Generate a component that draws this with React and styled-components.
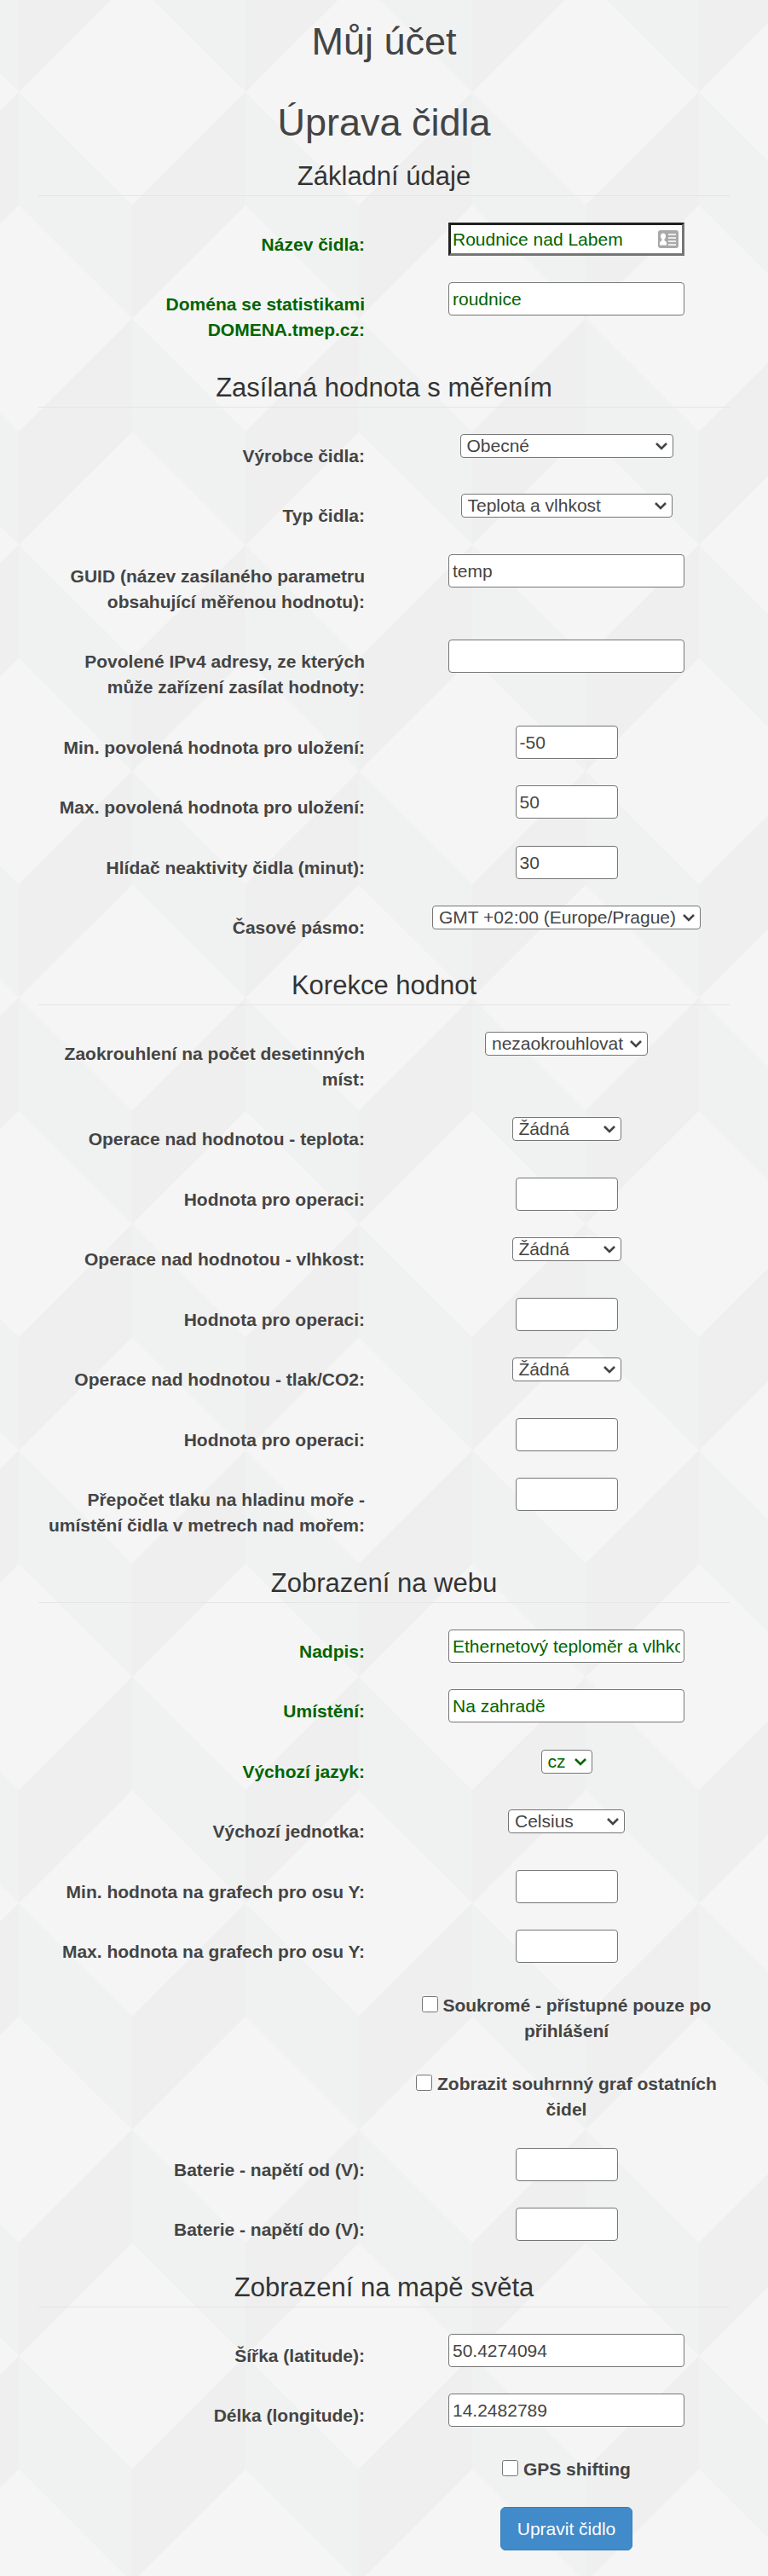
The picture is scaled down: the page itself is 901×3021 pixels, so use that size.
import { useState } from 'react';
import styled, { createGlobalStyle } from 'styled-components';

const svgUrl = (svg) => `url("data:image/svg+xml,${encodeURIComponent(svg)}")`;

const pattern = svgUrl(
  `<svg xmlns="http://www.w3.org/2000/svg" width="266" height="531" viewBox="0 0 4 8" preserveAspectRatio="none">
    <path fill="#f5f5f5" d="M0 0h4v8H0z"/>
    <path fill="#f0f2f1" d="M0 0l2 2v2L0 2zM4 6L2 4v2l2 2z"/>
    <path fill="#efefef" d="M4 0L2 2v2l2-2zM0 6l2-2v2L0 8z"/>
  </svg>`
);

const chevron = (color) =>
  svgUrl(
    `<svg xmlns="http://www.w3.org/2000/svg" width="14" height="10" viewBox="0 0 14 10">
      <path fill="none" stroke="${color}" stroke-width="2.6" d="M1 2l6 6 6-6"/>
    </svg>`
  );

const sections = [
  {
    title: 'Základní údaje',
    fields: [
      { id: 'nazev', label: 'Název čidla:', value: 'Roudnice nad Labem', green: true, active: true },
      { id: 'domena', label: 'Doména se statistikami DOMENA.tmep.cz:', value: 'roudnice', green: true },
    ],
  },
  {
    title: 'Zasílaná hodnota s měřením',
    fields: [
      { id: 'vyrobce', type: 'select', label: 'Výrobce čidla:', value: 'Obecné', width: 250 },
      { id: 'typ', type: 'select', label: 'Typ čidla:', value: 'Teplota a vlhkost', width: 248 },
      { id: 'guid', label: 'GUID (název zasílaného parametru obsahující měřenou hodnotu):', value: 'temp' },
      { id: 'ipv4', label: 'Povolené IPv4 adresy, ze kterých může zařízení zasílat hodnoty:', value: '' },
      { id: 'min', label: 'Min. povolená hodnota pro uložení:', value: '-50', small: true },
      { id: 'max', label: 'Max. povolená hodnota pro uložení:', value: '50', small: true },
      { id: 'hlidac', label: 'Hlídač neaktivity čidla (minut):', value: '30', small: true },
      { id: 'pasmo', type: 'select', label: 'Časové pásmo:', value: 'GMT +02:00 (Europe/Prague)', width: 315 },
    ],
  },
  {
    title: 'Korekce hodnot',
    fields: [
      { id: 'zaokrouhleni', type: 'select', label: 'Zaokrouhlení na počet desetinných míst:', value: 'nezaokrouhlovat', width: 191 },
      { id: 'op-teplota', type: 'select', label: 'Operace nad hodnotou - teplota:', value: 'Žádná', width: 128 },
      { id: 'hodnota-teplota', label: 'Hodnota pro operaci:', value: '', small: true },
      { id: 'op-vlhkost', type: 'select', label: 'Operace nad hodnotou - vlhkost:', value: 'Žádná', width: 128 },
      { id: 'hodnota-vlhkost', label: 'Hodnota pro operaci:', value: '', small: true },
      { id: 'op-tlak', type: 'select', label: 'Operace nad hodnotou - tlak/CO2:', value: 'Žádná', width: 128 },
      { id: 'hodnota-tlak', label: 'Hodnota pro operaci:', value: '', small: true },
      { id: 'vyska', label: 'Přepočet tlaku na hladinu moře - umístění čidla v metrech nad mořem:', value: '', small: true },
    ],
  },
  {
    title: 'Zobrazení na webu',
    fields: [
      { id: 'nadpis', label: 'Nadpis:', value: 'Ethernetový teploměr a vlhkoměr', green: true },
      { id: 'umisteni', label: 'Umístění:', value: 'Na zahradě', green: true },
      { id: 'jazyk', type: 'select', label: 'Výchozí jazyk:', value: 'cz', width: 60, green: true },
      { id: 'jednotka', type: 'select', label: 'Výchozí jednotka:', value: 'Celsius', width: 137 },
      { id: 'graf-min', label: 'Min. hodnota na grafech pro osu Y:', value: '', small: true },
      { id: 'graf-max', label: 'Max. hodnota na grafech pro osu Y:', value: '', small: true },
      { id: 'soukrome', type: 'checkbox', label: 'Soukromé - přístupné pouze po přihlášení' },
      { id: 'souhrn', type: 'checkbox', label: 'Zobrazit souhrnný graf ostatních čidel' },
      { id: 'bat-od', label: 'Baterie - napětí od (V):', value: '', small: true },
      { id: 'bat-do', label: 'Baterie - napětí do (V):', value: '', small: true },
    ],
  },
  {
    title: 'Zobrazení na mapě světa',
    fields: [
      { id: 'sirka', label: 'Šířka (latitude):', value: '50.4274094' },
      { id: 'delka', label: 'Délka (longitude):', value: '14.2482789' },
      { id: 'gps', type: 'checkbox', label: 'GPS shifting' },
    ],
  },
];

const ContactIcon = () => (
  <svg width="24" height="21" viewBox="0 0 24 21" aria-hidden="true">
    <rect width="24" height="21" rx="3" fill="#a9a9a9" />
    <ellipse cx="6" cy="7" rx="3" ry="3.5" fill="#fff" />
    <path d="M4.5 9h3v3l2.5 2v3.5H2V14l2.5-2z" fill="#fff" />
    <path d="M12 5h9M12 9h9M12 13h9M12 17h9" stroke="#fff" strokeWidth="1.6" />
  </svg>
);

const Field = ({ id, type, label, value, width, small, green, active }) => {
  const [text, setText] = useState(value);

  if (type === 'checkbox') {
    return (
      <Row>
        <CheckLabel htmlFor={id}>
          <Check type="checkbox" id={id} /> {label}
        </CheckLabel>
      </Row>
    );
  }

  return (
    <Row>
      <Label htmlFor={id} $green={green}>
        {label}
      </Label>
      <Control>
        {type === 'select' ? (
          <Select id={id} $width={width} $green={green}>
            <option>{value}</option>
          </Select>
        ) : (
          <Input
            type="text"
            id={id}
            value={text}
            onChange={(e) => setText(e.target.value)}
            $small={small}
            $green={green}
            $active={active}
          />
        )}
        {active && (
          <Autofill>
            <ContactIcon />
          </Autofill>
        )}
      </Control>
    </Row>
  );
};

const App = () => {
  return (
    <>
      <GlobalStyle />
      <Page>
        <Title>Můj účet</Title>
        <Title>Úprava čidla</Title>
        <form onSubmit={(e) => e.preventDefault()}>
          {sections.map(({ title, fields }) => (
            <Section key={title}>
              <Legend>{title}</Legend>
              {fields.map((field) => (
                <Field key={field.id} {...field} />
              ))}
            </Section>
          ))}
          <Actions>
            <Submit type="submit">Upravit čidlo</Submit>
          </Actions>
        </form>
      </Page>
    </>
  );
};

export default App;

const GlobalStyle = createGlobalStyle`
  * {
    box-sizing: border-box;
  }

  body {
    margin: 0;
    font-family: "Liberation Sans", Arial, sans-serif;
    font-size: 21px;
    line-height: 30px;
    color: #444;
    background: #f5f5f5 ${pattern} 22px 108px / 266px 531px;
  }

  input,
  select,
  button {
    margin: 0;
    font: inherit;
  }
`;

const Page = styled.main`
  padding: 24px 45px 28px;
`;

const Title = styled.h1`
  margin: 0 0 15px;
  font-size: 45px;
  font-weight: 400;
  line-height: 50px;
  text-align: center;

  & + & {
    margin-top: 45px;
  }
`;

const Section = styled.fieldset`
  min-width: 0;
  margin: 0;
  padding: 0;
  border: 0;
`;

const Legend = styled.legend`
  width: 100%;
  margin-bottom: 31px;
  padding: 0;
  border-bottom: 1px solid #e5e5e5;
  font-size: 31px;
  line-height: 45px;
  color: #333;
  text-align: center;
`;

const Row = styled.div`
  display: grid;
  grid-template-columns: 1fr 1fr;
  column-gap: 45px;
  margin-bottom: 30px;

  &:nth-of-type(odd) {
    margin-bottom: 29px;
  }
`;

const Label = styled.label`
  padding-top: 11px;
  font-weight: 700;
  text-align: right;
  color: ${({ $green }) => ($green ? '#006400' : '#444')};
`;

const Control = styled.div`
  position: relative;
  display: flex;
  justify-content: center;
  align-items: flex-start;
`;

const Input = styled.input`
  width: ${({ $small }) => ($small ? 120 : 277)}px;
  height: 39px;
  padding: ${({ $active }) => ($active ? '0 2px' : '0 4px')};
  border: ${({ $active }) => ($active ? '3px inset #767676' : '1px solid #767676')};
  border-radius: ${({ $active }) => ($active ? 0 : 4)}px;
  background: #fff;
  color: ${({ $green }) => ($green ? '#006400' : '#444')};
`;

const Autofill = styled.span`
  position: absolute;
  top: 9px;
  left: 50%;
  display: flex;
  margin-left: 107px;
`;

const Select = styled.select`
  width: ${({ $width }) => $width}px;
  height: 28px;
  padding: 0 24px 0 7px;
  appearance: none;
  border: 1px solid #767676;
  border-radius: 4px;
  line-height: 26px;
  color: ${({ $green }) => ($green ? '#006400' : '#444')};
  background: #fff ${({ $green }) => chevron($green ? '#006400' : '#444')} right 6px center no-repeat;
`;

const CheckLabel = styled.label`
  grid-column: 2;
  padding-top: 3px;
  font-weight: 700;
  text-align: center;
`;

const Check = styled.input`
  width: 19px;
  height: 19px;
  vertical-align: -1px;
`;

const Actions = styled.div`
  display: grid;
  grid-template-columns: 1fr 1fr;
  column-gap: 45px;
  justify-items: center;
`;

const Submit = styled.button`
  grid-column: 2;
  height: 51px;
  padding: 0 19px;
  border: 1px solid #357ebd;
  border-radius: 6px;
  background: #428bca;
  color: #fff;
`;
